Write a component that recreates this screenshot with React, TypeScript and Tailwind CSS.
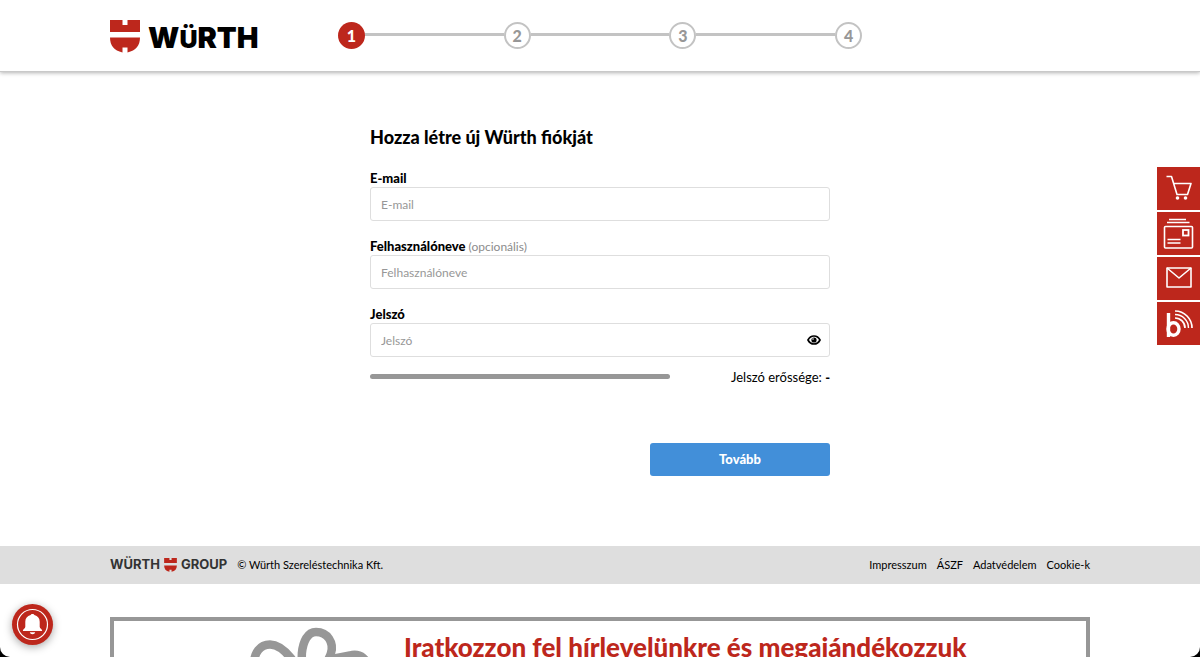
import { useState } from 'react'
import type { ReactNode } from 'react'

const STEPS = [1, 2, 3, 4]
const FOOTER_LINKS = ['Impresszum', 'ÁSZF', 'Adatvédelem', 'Cookie-k']

// Würth shield: notched top half, white bar, rounded bottom half
function Shield({ className }: { className: string }) {
  return (
    <svg viewBox="0 0 30 33" className={className} aria-hidden="true">
      <path
        fill="#bd271c"
        d="M0 0h12.500v5h5V0h12.500v12H0zM0 17.500h30c0 8-4 13-12.500 15V27.500h-5v5C4 30.500 0 25.500 0 17.500z"
      />
    </svg>
  )
}

function Logo() {
  return (
    <a href="#" aria-label="Würth" className="flex w-[151px] shrink-0 items-center gap-2 pt-0.5">
      <Shield className="h-[33px] w-[30px] shrink-0" />
      <span className="pt-1 font-['Inter',sans-serif] text-[29px] leading-[33px] font-black text-black">
        W<span className="text-[25px]">Ü</span>RTH
      </span>
    </a>
  )
}

function Stepper({ current }: { current: number }) {
  return (
    <ol className="flex w-full max-w-[524px] items-center">
      {STEPS.map((step) => (
        <li key={step} className={step === 1 ? 'flex items-center' : 'flex flex-1 items-center'}>
          {step > 1 && <span className="mb-0.5 h-[3px] flex-1 bg-[#c3c3c3]" />}
          <span
            className={
              step === current
                ? 'flex size-[27px] items-center justify-center rounded-full bg-[#bd271c] text-base font-black text-white'
                : 'flex size-[27px] items-center justify-center rounded-full border-2 border-[#c3c3c3] text-base font-black text-[#979797]'
            }
          >
            {step}
          </span>
        </li>
      ))}
    </ol>
  )
}

interface FieldProps {
  id: string
  label: string
  type: string
  hint?: string
  children?: ReactNode
}

function Field({ id, label, type, hint, children }: FieldProps) {
  return (
    <div>
      <label htmlFor={id} className="block text-[13px] leading-[18px] font-black">
        {label}
        {hint && <span className="text-xs font-normal text-[#8c8c8c]"> {hint}</span>}
      </label>
      <div className="relative">
        <input
          id={id}
          type={type}
          placeholder={label}
          className="block h-[34px] w-full rounded-[3px] border border-[#dedede] px-2.5 text-xs text-black outline-none placeholder:text-[#979797] focus:border-[#428fd9]"
        />
        {children}
      </div>
    </div>
  )
}

function EyeIcon() {
  return (
    <svg viewBox="0 0 14 12" className="h-3 w-3.5" aria-hidden="true">
      <path d="M1 6c1.300-2.600 3.500-4 6-4s4.700 1.400 6 4c-1.300 2.600-3.500 4-6 4S2.300 8.600 1 6z" fill="none" stroke="currentColor" strokeWidth="1.700" />
      <circle cx="7" cy="6" r="2.600" fill="currentColor" />
      <circle cx="6" cy="5" r="0.800" fill="#fff" />
    </svg>
  )
}

function CartIcon() {
  return (
    <svg viewBox="0 0 43 43" className="size-full" fill="none" stroke="currentColor" strokeWidth="1.6" aria-hidden="true">
      <path d="M9.500 9.500h5l5.500 18h10.500L34 16.500H17" strokeLinejoin="round" />
      <circle cx="20.500" cy="31" r="1.800" fill="currentColor" stroke="none" />
      <circle cx="28.500" cy="31" r="1.800" fill="currentColor" stroke="none" />
    </svg>
  )
}

function CardsIcon() {
  return (
    <svg viewBox="0 0 43 43" className="size-full" fill="none" stroke="currentColor" strokeWidth="1.600" aria-hidden="true">
      <path d="M12 7.500h17M10 10.500h22.500" />
      <rect x="7.500" y="14.500" width="28" height="21.500" rx="1" />
      <rect x="26" y="18" width="5.500" height="5.500" strokeWidth="1.800" />
      <path d="M10.500 27.500h13M10.500 31h13" />
    </svg>
  )
}

function MailIcon() {
  return (
    <svg viewBox="0 0 43 43" className="size-full" fill="none" stroke="currentColor" strokeWidth="1.600" strokeLinejoin="round" aria-hidden="true">
      <rect x="10" y="11" width="24" height="19" />
      <path d="M10 11l12 10 12-10" />
    </svg>
  )
}

function BlogIcon() {
  return (
    <svg viewBox="0 0 43 43" className="size-full" fill="none" stroke="currentColor" aria-hidden="true">
      <path d="M11.500 11v24" strokeWidth="3.400" />
      <ellipse cx="16.500" cy="27" rx="5.500" ry="6.300" strokeWidth="3.400" />
      <path d="M18 9a17 17 0 0 1 17 17" strokeWidth="1.700" />
      <path d="M18 12.500a13.500 13.500 0 0 1 13.500 13.500" strokeWidth="1.400" />
      <path d="M18 16a10 10 0 0 1 10 10" strokeWidth="1.700" />
    </svg>
  )
}

const SIDE_LINKS = [
  { label: 'Kosár', icon: <CartIcon /> },
  { label: 'Kártyák', icon: <CardsIcon /> },
  { label: 'Üzenet', icon: <MailIcon /> },
  { label: 'Blog', icon: <BlogIcon /> },
]

function SideLinks() {
  return (
    <nav className="fixed top-[167px] right-0 flex flex-col gap-0.5">
      {SIDE_LINKS.map((link) => (
        <a key={link.label} href="#" aria-label={link.label} className="size-[43px] bg-[#bd271c] text-white">
          {link.icon}
        </a>
      ))}
    </nav>
  )
}

function NotificationButton() {
  return (
    <button
      type="button"
      aria-label="Értesítések"
      className="fixed bottom-3 left-3 size-[41px] rounded-full bg-[#bd271c] text-white shadow-[0_2px_8px_rgba(0,0,0,0.35)]"
    >
      <svg viewBox="0 0 41 41" className="size-full" aria-hidden="true">
        <circle cx="20.500" cy="20.500" r="15" fill="none" stroke="currentColor" strokeWidth="1.200" />
        <path
          fill="currentColor"
          d="M20.500 10c1 0 1.700.6 1.900 1.100 3.400.8 5.300 3.400 5.300 6.700v5c0 1.700 2.500 2.500 2.500 4.300H10.800c0-1.800 2.500-2.600 2.500-4.300v-5c0-3.300 1.900-5.900 5.300-6.700.2-.5.900-1.100 1.900-1.100zM17.800 28.300h5.400c-.3 1.300-1.300 2-2.700 2s-2.400-.7-2.700-2z"
        />
      </svg>
    </button>
  )
}

// Gift bow next to the newsletter headline
function Bow() {
  return (
    <svg viewBox="0 0 120 90" className="h-[90px] w-[120px] shrink-0" fill="none" stroke="#979797" strokeWidth="8.500" aria-hidden="true">
      <path d="M58 64C48 46 35 23.500 20 23.500 10 23.500 4 32 4 43c0 14 20 21 54 21z" />
      <path d="M58 64C48 50 49 11 66 11c12 0 18 11 15 21-2 8-12 20-23 32z" />
      <path d="M58 64l24-26 18-3.500c6-2 13 0 16 6 3 9-8 15-18 18-10 3-24 5.500-40 5.500z" />
    </svg>
  )
}

export default function App() {
  const [showPassword, setShowPassword] = useState(false)

  return (
    <div className="bg-black">
      <div className="h-screen overflow-x-hidden overflow-y-auto rounded-b-[10px] bg-white font-['Lato','Liberation_Sans',sans-serif] text-black [scrollbar-width:none]">
        <header className="border-b border-[#c9c9c9] shadow-[0_1px_4px_rgba(0,0,0,0.3)]">
          <div className="mx-auto flex h-[71px] max-w-[980px] items-center gap-[77px]">
            <Logo />
            <Stepper current={1} />
          </div>
        </header>

        <main className="mx-auto max-w-[460px] pt-[53px] pb-[70px]">
          <h1 className="text-lg leading-6 font-black">Hozza létre új Würth fiókját</h1>
          <form className="mt-5" onSubmit={(e) => e.preventDefault()}>
            <div className="flex flex-col gap-4">
              <Field id="email" label="E-mail" type="email" />
              <Field id="username" label="Felhasználóneve" type="text" hint="(opcionális)" />
              <Field id="password" label="Jelszó" type={showPassword ? 'text' : 'password'}>
                <button
                  type="button"
                  aria-label="Jelszó megjelenítése"
                  className="absolute inset-y-0 right-0 flex w-8 items-center justify-center"
                  onClick={() => setShowPassword(!showPassword)}
                >
                  <EyeIcon />
                </button>
              </Field>
            </div>

            <div className="mt-3 flex items-center justify-between">
              <div className="mb-0.5 h-[5px] w-[300px] rounded-full bg-[#979797]" />
              <p className="text-[13px] leading-4">
                Jelszó erőssége: <b className="font-black">-</b>
              </p>
            </div>

            <div className="mt-[58px] flex justify-end">
              <button type="submit" className="h-[33px] w-[180px] rounded-[3px] bg-[#428fd9] text-[13px] font-black text-white">
                Tovább
              </button>
            </div>
          </form>
        </main>

        <footer className="bg-[#dedede]">
          <div className="mx-auto flex h-[38px] max-w-[980px] items-center justify-between text-[11px]">
            <div className="flex items-center gap-2.5">
              <span className="flex items-center gap-1 font-['Inter',sans-serif] text-[13px] font-bold text-[#333]">
                WÜRTH
                <Shield className="h-3.5 w-[13px]" />
                GROUP
              </span>
              <span>© Würth Szereléstechnika Kft.</span>
            </div>
            <nav className="flex gap-2.5">
              {FOOTER_LINKS.map((link) => (
                <a key={link} href="#">
                  {link}
                </a>
              ))}
            </nav>
          </div>
        </footer>

        <section className="mx-auto mt-[33px] flex max-w-[980px] gap-[34px] border-4 border-[#979797] pl-[136px]">
          <Bow />
          <h2 className="pt-2.5 text-[26px] leading-8 font-black whitespace-nowrap text-[#bd271c]">
            Iratkozzon fel hírlevelünkre és megajándékozzuk
          </h2>
        </section>
      </div>
      <SideLinks />
      <NotificationButton />
    </div>
  )
}
